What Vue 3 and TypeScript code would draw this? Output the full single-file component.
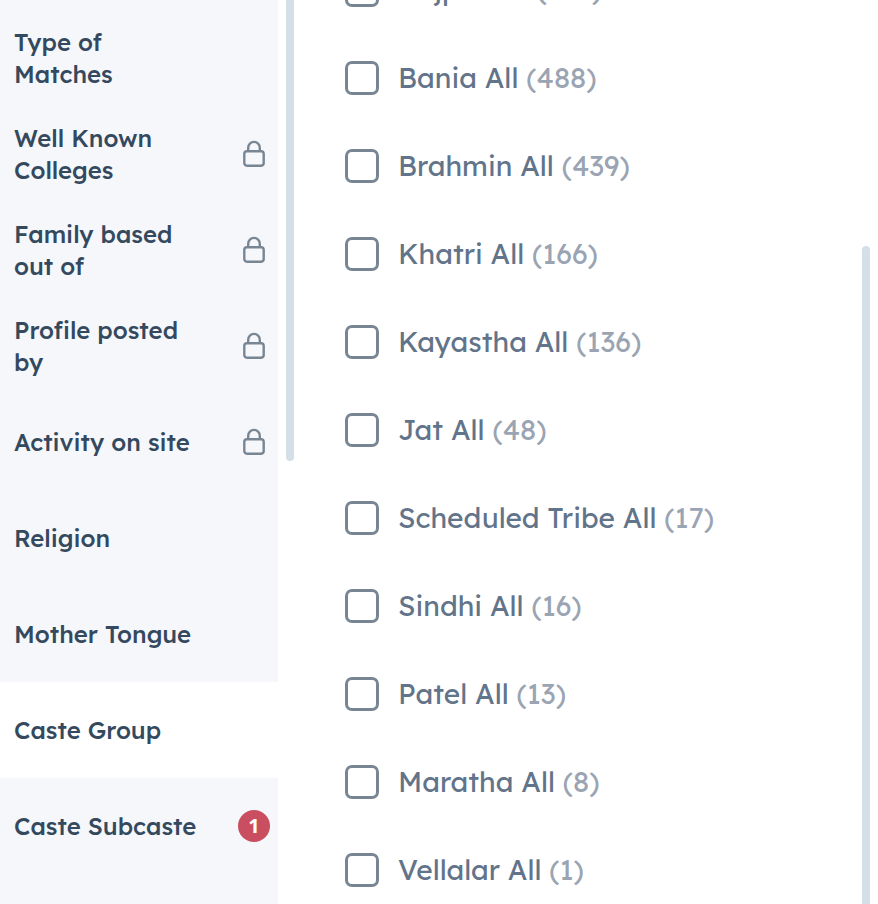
<script setup lang="ts">
import { ref } from 'vue'

interface Category {
  name: string
  locked?: boolean
  count?: number
}

interface Option {
  name: string
  count: number
}

const categories: Category[] = [
  { name: 'Type of Matches' },
  { name: 'Well Known Colleges', locked: true },
  { name: 'Family based out of', locked: true },
  { name: 'Profile posted by', locked: true },
  { name: 'Activity on site', locked: true },
  { name: 'Religion' },
  { name: 'Mother Tongue' },
  { name: 'Caste Group' },
  { name: 'Caste Subcaste', count: 1 },
]

const options: Option[] = [
  { name: 'Rajput All', count: 337 },
  { name: 'Bania All', count: 488 },
  { name: 'Brahmin All', count: 439 },
  { name: 'Khatri All', count: 166 },
  { name: 'Kayastha All', count: 136 },
  { name: 'Jat All', count: 48 },
  { name: 'Scheduled Tribe All', count: 17 },
  { name: 'Sindhi All', count: 16 },
  { name: 'Patel All', count: 13 },
  { name: 'Maratha All', count: 8 },
  { name: 'Vellalar All', count: 1 },
]

const active = ref('Caste Group')
const selected = ref<string[]>([])
</script>

<template>
  <div class="filters">
    <nav class="sidebar">
      <button
        v-for="category in categories"
        :key="category.name"
        type="button"
        class="category"
        :class="{ active: category.name === active }"
        @click="active = category.name"
      >
        <span class="category-name">{{ category.name }}</span>
        <svg v-if="category.locked" class="lock" viewBox="0 0 24 28" aria-hidden="true">
          <rect x="2.3" y="11.3" width="19.4" height="14.4" rx="2.6" />
          <path d="M6.2 11V7.7a5.8 5.8 0 0 1 11.6 0V11" />
        </svg>
        <span v-if="category.count" class="badge">{{ category.count }}</span>
      </button>
    </nav>
    <div class="track"><div class="thumb thumb-start"></div></div>
    <main class="panel">
      <ul class="options">
        <li v-for="option in options" :key="option.name">
          <label class="option">
            <input v-model="selected" type="checkbox" class="box" :value="option.name" />
            <span>{{ option.name }} <span class="count">({{ option.count }})</span></span>
          </label>
        </li>
      </ul>
    </main>
    <div class="track"><div class="thumb thumb-end"></div></div>
  </div>
</template>

<style>
body {
  margin: 0;
  background: #fff;
}
</style>

<style scoped>
.filters {
  display: grid;
  grid-template-columns: 278px 24px minmax(0, 1fr) 24px;
  height: 100vh;
  overflow: hidden;
  font-family: Lexend, Inter, "Liberation Sans", sans-serif;
}

.sidebar {
  padding-top: 10px;
  background: #f5f7fb;
}

.category {
  display: flex;
  align-items: center;
  justify-content: space-between;
  width: 100%;
  height: 96px;
  padding: 0 8px 0 14px;
  border: 0;
  background: transparent;
  color: #34495e;
  font: inherit;
  font-size: 24px;
  font-weight: 500;
  line-height: 32px;
  text-align: left;
  cursor: pointer;
}

.category.active {
  background: #fff;
}

.category-name {
  max-width: 190px;
}

.lock {
  flex: none;
  width: 24px;
  height: 28px;
  margin-right: 4px;
  fill: none;
  stroke: #788694;
  stroke-width: 2.4;
}

.badge {
  flex: none;
  width: 32px;
  height: 32px;
  border-radius: 50%;
  background: #c94f60;
  color: #fff;
  font-family: "Noto Sans", sans-serif;
  font-size: 20px;
  font-weight: 700;
  text-align: center;
}

.track {
  display: flex;
  flex-direction: column;
  padding: 0 8px;
}

.thumb {
  border-radius: 4px;
  background: #d5dfe7;
}

.thumb-start {
  height: 51%;
  border-radius: 0 0 4px 4px;
}

.thumb-end {
  flex: 1;
  margin-top: 246px;
  border-radius: 4px 4px 0 0;
}

.panel {
  min-width: 0;
  overflow: hidden;
}

.options {
  margin: -54px 0 0;
  padding: 0 0 0 43px;
  list-style: none;
}

.option {
  display: flex;
  align-items: center;
  gap: 19px;
  height: 88px;
  color: #62748a;
  font-size: 28px;
  font-weight: 400;
  line-height: 40px;
  cursor: pointer;
}

.box {
  flex: none;
  appearance: none;
  box-sizing: border-box;
  width: 34px;
  height: 34px;
  margin: 0;
  border: 3px solid #788694;
  border-radius: 7px;
  background: #fff;
  cursor: pointer;
}

.box:checked {
  background: #788694;
}

.count {
  color: #9aa4b2;
}
</style>
